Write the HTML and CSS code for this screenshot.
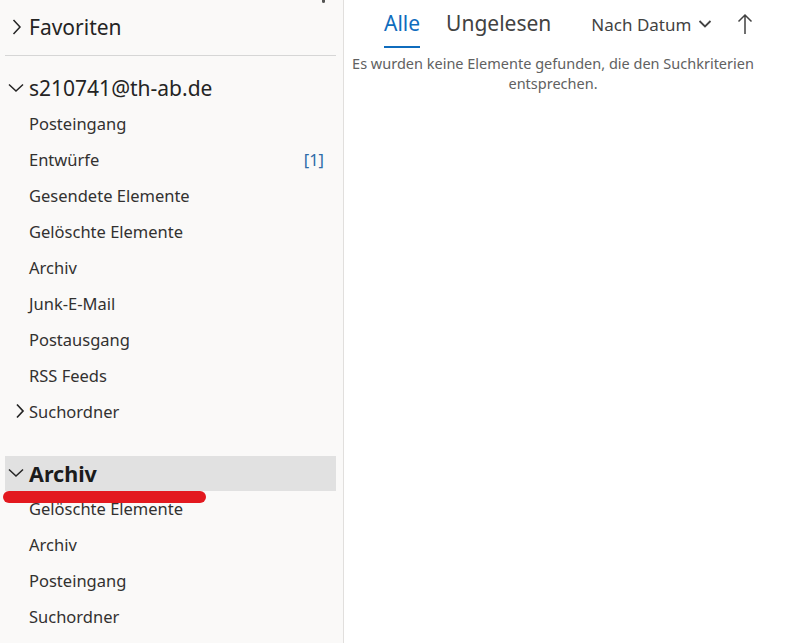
FILE: index.html
```html
<!DOCTYPE html>
<html lang="de">
<head>
<meta charset="utf-8">
<link rel="stylesheet" href="styles.css">
</head>
<body>
<div class="app">
  <nav class="nav">
    <div class="topmark"></div>
    <div class="row head">
      <svg class="chev" viewBox="0 0 16 16" width="16" height="16"><path d="M5.5 1 L12 8 L5.5 15" fill="none" stroke="#242424" stroke-width="1.5"/></svg>
      <span>Favoriten</span>
    </div>
    <div class="divider"></div>
    <div class="row head acct">
      <svg class="chev" viewBox="0 0 16 16" width="16" height="16"><path d="M1 4.5 L8 11 L15 4.5" fill="none" stroke="#242424" stroke-width="1.5"/></svg>
      <span>s210741@th-ab.de</span>
    </div>
    <div class="row item">Posteingang</div>
    <div class="row item"><span>Entwürfe</span><span class="count">[1]</span></div>
    <div class="row item">Gesendete Elemente</div>
    <div class="row item">Gelöschte Elemente</div>
    <div class="row item">Archiv</div>
    <div class="row item">Junk-E-Mail</div>
    <div class="row item">Postausgang</div>
    <div class="row item">RSS Feeds</div>
    <div class="row item sub">
      <svg class="chev small" viewBox="0 0 12 16" width="12" height="16"><path d="M3 1.5 L9 8 L3 14.5" fill="none" stroke="#242424" stroke-width="1.7"/></svg>
      <span>Suchordner</span>
    </div>
    <div class="archive-wrap">
      <div class="row head selected">
        <svg class="chev" viewBox="0 0 16 16" width="16" height="16"><path d="M1 4.5 L8 11 L15 4.5" fill="none" stroke="#242424" stroke-width="1.5"/></svg>
        <span>Archiv</span>
      </div>
      <div class="mark"></div>
    </div>
    <div class="row item">Gelöschte Elemente</div>
    <div class="row item">Archiv</div>
    <div class="row item">Posteingang</div>
    <div class="row item">Suchordner</div>
  </nav>
  <main class="main">
    <div class="toolbar">
      <div class="tab active">Alle</div>
      <div class="tab">Ungelesen</div>
      <div class="sort">
        <span>Nach Datum</span>
        <svg viewBox="0 0 14 14" width="14" height="14"><path d="M1.5 4 L7 9.5 L12.5 4" fill="none" stroke="#424242" stroke-width="1.8"/></svg>
      </div>
      <svg class="up" viewBox="0 0 16 22" width="16" height="22"><path d="M8 21 V2 M1.5 8.5 L8 2 L14.5 8.5" fill="none" stroke="#424242" stroke-width="1.5"/></svg>
    </div>
    <p class="empty">Es wurden keine Elemente gefunden, die den Suchkriterien entsprechen.</p>
  </main>
</div>
</body>
</html>
```
FILE: styles.css
```css
html, body {
  margin: 0;
  padding: 0;
  background: #ffffff;
}
body {
  font-family: "Noto Sans", "Open Sans", sans-serif;
  color: #242424;
}
.app {
  display: flex;
  width: 790px;
  height: 643px;
  overflow: hidden;
}
.nav {
  position: relative;
  width: 344px;
  flex: none;
  background: #faf9f8;
  border-right: 1px solid #e1dfdd;
  padding-top: 9px;
  box-sizing: border-box;
}
.topmark {
  position: absolute;
  left: 322px;
  top: 0;
  width: 3px;
  height: 3px;
  background: #555;
  border-radius: 0 0 2px 2px;
}
.row {
  display: flex;
  align-items: center;
  height: 36px;
  box-sizing: border-box;
}
.head {
  font-size: 21px;
  padding-left: 8px;
}
.head .chev {
  margin-right: 5px;
  flex: none;
}
.acct {
  margin-top: 14px;
}
.divider {
  height: 1px;
  background: #d6d6d6;
  margin: 10px 7px 0 5px;
}
.item {
  font-size: 16.5px;
  padding-left: 29px;
  padding-right: 19px;
  padding-bottom: 2px;
  justify-content: space-between;
  color: #323130;
}
.item.sub {
  justify-content: flex-start;
  padding-left: 14px;
}
.item.sub .chev {
  margin-right: 3px;
}
.count {
  color: #2f6ca8;
}
.archive-wrap {
  position: relative;
  margin-top: 26px;
}
.selected {
  height: 35px;
  margin: 0 7px 0 5px;
  padding-left: 3px;
  padding-bottom: 1px;
  background: #e1e1e1;
  font-weight: 700;
  font-size: 21.5px;
  color: #1b1b1b;
}
.mark {
  position: absolute;
  left: 3px;
  top: 35px;
  width: 203px;
  height: 12px;
  border-radius: 6px;
  background: #e3191f;
  z-index: 2;
}
.main {
  flex: 1;
  background: #ffffff;
}
.toolbar {
  display: flex;
  align-items: center;
  height: 48px;
  padding-left: 40px;
  box-sizing: border-box;
}
.tab {
  font-size: 21px;
  color: #424242;
  height: 48px;
  line-height: 46px;
  box-sizing: border-box;
  margin-right: 26px;
}
.tab.active {
  color: #0f6cbd;
  border-bottom: 2px solid #0f6cbd;
}
.sort {
  display: flex;
  align-items: center;
  gap: 7px;
  font-size: 17px;
  color: #424242;
  margin-left: 14px;
}
.up {
  margin-left: 25px;
}
.empty {
  margin: 5px 34px 0 6px;
  text-align: center;
  font-size: 14.5px;
  line-height: 20px;
  color: #616161;
}
```
